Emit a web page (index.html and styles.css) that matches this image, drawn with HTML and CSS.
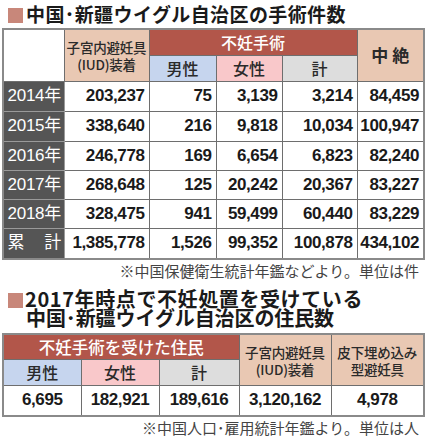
FILE: index.html
```html
<!DOCTYPE html>
<html lang="ja">
<head>
    <meta charset="UTF-8">
    <title>中国・新疆ウイグル自治区の手術件数</title>
    <link rel="stylesheet" href="styles.css">
</head>
<body>
    <h2 class="title"><span class="mark"></span>中国･新疆ウイグル自治区の手術件数</h2>

    <table class="chart surgery">
        <colgroup>
            <col style="width:61px"><col style="width:85px"><col style="width:67px">
            <col style="width:66px"><col style="width:75px"><col style="width:67px">
        </colgroup>
        <tr class="head1">
            <th rowspan="2" class="blank"></th>
            <th rowspan="2" class="peach small">子宮内避妊具<br>(IUD)装着</th>
            <th colspan="3" class="red">不妊手術</th>
            <th rowspan="2" class="peach big">中 絶</th>
        </tr>
        <tr class="head2">
            <th class="blue">男性</th>
            <th class="pink">女性</th>
            <th class="gray">計</th>
        </tr>
        <tr class="r30"><th class="year">2014年</th><td>203,237</td><td>75</td><td>3,139</td><td>3,214</td><td>84,459</td></tr>
        <tr class="r30"><th class="year">2015年</th><td>338,640</td><td>216</td><td>9,818</td><td>10,034</td><td>100,947</td></tr>
        <tr class="r29"><th class="year">2016年</th><td>246,778</td><td>169</td><td>6,654</td><td>6,823</td><td>82,240</td></tr>
        <tr class="r29"><th class="year">2017年</th><td>268,648</td><td>125</td><td>20,242</td><td>20,367</td><td>83,227</td></tr>
        <tr class="r29"><th class="year">2018年</th><td>328,475</td><td>941</td><td>59,499</td><td>60,440</td><td>83,229</td></tr>
        <tr class="r31"><th class="year total"><span>累</span><span>計</span></th><td>1,385,778</td><td>1,526</td><td>99,352</td><td>100,878</td><td>434,102</td></tr>
    </table>
    <p class="note">※中国保健衛生統計年鑑などより。単位は件</p>

    <h2 class="title two">
        <span class="line"><span class="mark"></span>2017年時点で不妊処置を受けている</span>
        <span class="line indent">中国･新疆ウイグル自治区の住民数</span>
    </h2>

    <table class="chart residents">
        <colgroup>
            <col style="width:78px"><col style="width:78px"><col style="width:80px">
            <col style="width:92px"><col style="width:93px">
        </colgroup>
        <tr class="head1">
            <th colspan="3" class="red">不妊手術を受けた住民</th>
            <th rowspan="2" class="peach small">子宮内避妊具<br>(IUD)装着</th>
            <th rowspan="2" class="peach small">皮下埋め込み<br>型避妊具</th>
        </tr>
        <tr class="head2">
            <th class="blue">男性</th>
            <th class="pink">女性</th>
            <th class="gray">計</th>
        </tr>
        <tr class="data">
            <td>6,695</td><td>182,921</td><td>189,616</td><td>3,120,162</td><td>4,978</td>
        </tr>
    </table>
    <p class="note">※中国人口･雇用統計年鑑より。単位は人</p>
</body>
</html>
```

FILE: styles.css
```css
body {
    margin: 0;
    padding: 0 3px 0 2px;
    background: #fff;
    color: #1a1a1a;
    font-family: "Liberation Sans", "Noto Sans CJK JP", sans-serif;
}
.title {
    margin: 0;
    padding: 3px 0 0 6px;
    height: 25px;
    font-family: "Noto Sans CJK JP", sans-serif;
    font-size: 19px;
    line-height: 22px;
    font-weight: bold;
    letter-spacing: 0.4px;
    color: #1a1a1a;
}
.title .mark {
    display: inline-block;
    width: 15px;
    height: 15px;
    margin-right: 3px;
    background: #c8877a;
    vertical-align: -1px;
}
.title.two {
    height: auto;
    padding: 9px 0 6px 6px;
    font-size: 20px;
    line-height: 19px;
    letter-spacing: 0.6px;
}
.title.two .line { display: block; }
.title.two .mark { margin-right: 2px; }
.title.two .indent { padding-left: 18px; letter-spacing: -0.1px; }
.chart {
    border-collapse: collapse;
    table-layout: fixed;
    width: 421px;
    border: 2px solid #8a8a8a;
}
.chart th, .chart td {
    border: 1px solid #6e6e6e;
    padding: 0;
    text-align: center;
}
.chart th {
    font-family: "Noto Sans CJK JP", sans-serif;
    font-weight: 500;
    font-size: 16px;
    line-height: 18px;
    color: #2a2a2a;
}
.chart td {
    font-size: 17px;
    font-weight: bold;
    text-align: right;
    padding-right: 4px;
    letter-spacing: -0.4px;
    color: #1a1a1a;
}
.head1 { height: 26px; }
.head2 { height: 26px; }
.r30 { height: 30px; }
.r29 { height: 29px; }
.r31 { height: 31px; }
.blank { background: #fff; }
.peach { background: #e9c8b3; }
.chart .peach.small { font-size: 13.5px; line-height: 17px; padding-top: 2px; letter-spacing: -0.2px; }
.chart .peach.big { font-size: 17px; font-weight: bold; }
.chart .red {
    background: #b2564a;
    color: #fff;
    font-size: 16px;
}
.blue { background: #c6d5ee; }
.pink { background: #f9c8ca; }
.gray { background: #dddddd; }
.chart th.year {
    background: #555555;
    color: #fff;
    font-family: "Liberation Sans", "Noto Sans CJK JP", sans-serif;
    font-size: 17px;
    font-weight: normal;
    border-color: #9a9a9a;
    border-left-color: #555;
    padding-left: 1px;
    letter-spacing: -0.3px;
}
.year.total span { display: inline-block; }
.year.total span:first-child { margin-right: 20px; }
.note {
    margin: 2px 0 0;
    padding-right: 4px;
    text-align: right;
    font-family: "Noto Sans CJK JP", sans-serif;
    font-size: 15px;
    line-height: 18px;
    color: #444;
}
.residents .head1 { height: 25px; }
.chart.residents .red { font-size: 16.5px; }
.data { height: 31px; }
.residents td { text-align: center; padding-right: 0; }
```
